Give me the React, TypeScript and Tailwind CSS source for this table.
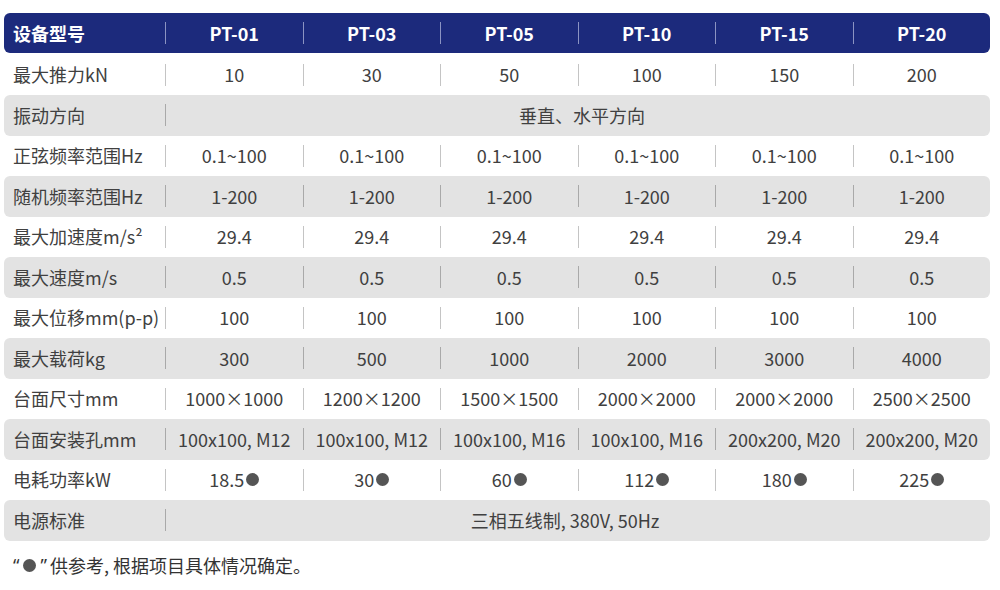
import React from 'react'

type Row = {
  label: string
  values?: React.ReactNode[]
  merged?: string
  shift?: string
}

const Dot = () => (
  <span className="inline-block w-[13px] h-[13px] rounded-full bg-[#555] ml-[2px] align-[-1px]" />
)

const power = (v: string) => (
  <span className="inline-flex items-center">
    {v}
    <Dot />
  </span>
)

const rows: Row[] = [
  { label: '最大推力kN', values: ['10', '30', '50', '100', '150', '200'] },
  { label: '振动方向', merged: '垂直、水平方向', shift: 'pl-[8px]' },
  { label: '正弦频率范围Hz', values: Array(6).fill('0.1~100') },
  { label: '随机频率范围Hz', values: Array(6).fill('1-200') },
  { label: '最大加速度m/s²', values: Array(6).fill('29.4') },
  { label: '最大速度m/s', values: Array(6).fill('0.5') },
  { label: '最大位移mm(p-p)', values: Array(6).fill('100') },
  { label: '最大载荷kg', values: ['300', '500', '1000', '2000', '3000', '4000'] },
  {
    label: '台面尺寸mm',
    values: ['1000×1000', '1200×1200', '1500×1500', '2000×2000', '2000×2000', '2500×2500'],
  },
  {
    label: '台面安装孔mm',
    values: ['100x100, M12', '100x100, M12', '100x100, M16', '100x100, M16', '200x200, M20', '200x200, M20'],
  },
  { label: '电耗功率kW', values: ['18.5', '30', '60', '112', '180', '225'].map(power) },
  { label: '电源标准', merged: '三相五线制, 380V, 50Hz', shift: 'pr-[26px]' },
]

const models = ['PT-01', 'PT-03', 'PT-05', 'PT-10', 'PT-15', 'PT-20']

function Cell({ children, divider, shift = '' }: { children?: React.ReactNode; divider: string; shift?: string }) {
  return (
    <div className="flex items-center h-full">
      <span className={`w-px h-[22px] ${divider}`} />
      <div className={`flex-1 text-center whitespace-nowrap ${shift}`}>{children}</div>
    </div>
  )
}

export default function App() {
  return (
    <div className="w-[1000px] h-[590px] bg-white font-['Noto_Sans_CJK_SC',sans-serif] text-[18px] text-[#404040] pt-[13px] pl-[4px]">
      <div className="w-[986px]">
        {/* Header */}
        <div className="grid grid-cols-[161px_repeat(6,1fr)] h-[40px] rounded-[6px] bg-[#1c2a7c] text-white font-bold items-center">
          <div className="pl-[9px]">设备型号</div>
          {models.map((m) => (
            <Cell key={m} divider="bg-[#8b93c2]">
              {m}
            </Cell>
          ))}
        </div>

        {/* Body */}
        <div className="mt-[1.5px]">
          {rows.map((r, i) => {
            const gray = i % 2 === 1
            const divider = gray ? 'bg-[#a9a9a9]' : 'bg-[#c4c4c4]'
            return (
              <div
                key={r.label}
                className={`grid grid-cols-[161px_repeat(6,1fr)] h-[40.5px] items-center rounded-[6px] ${
                  gray ? 'bg-[#e3e3e3]' : ''
                }`}
              >
                <div className="pl-[9px] whitespace-nowrap">{r.label}</div>
                {r.merged ? (
                  <div className="col-span-6 h-full">
                    <Cell divider={divider} shift={r.shift}>
                      {r.merged}
                    </Cell>
                  </div>
                ) : (
                  r.values!.map((v, j) => (
                    <Cell key={j} divider={divider}>
                      {v}
                    </Cell>
                  ))
                )}
              </div>
            )
          })}
        </div>

        {/* Note */}
        <div className="mt-[11px] pl-[9px] text-[#333] flex items-center">
          <span className="font-['Noto_Sans',sans-serif]">“</span>
          <span className="inline-block w-[13px] h-[13px] rounded-full bg-[#555] mx-[4px]" />
          <span className="font-['Noto_Sans',sans-serif]">”</span>
          <span className="ml-[3px]">供参考, 根据项目具体情况确定。</span>
        </div>
      </div>
    </div>
  )
}
